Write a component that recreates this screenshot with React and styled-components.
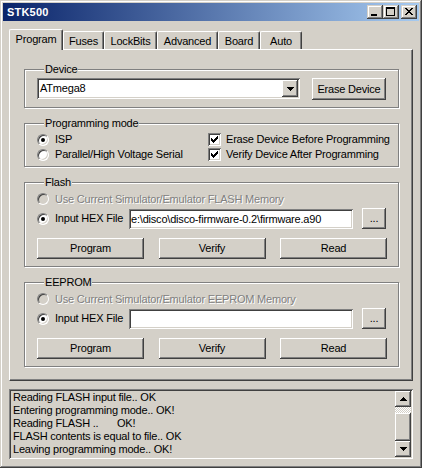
import React from 'react';
import styled, { createGlobalStyle } from 'styled-components';

const face = '#d4d0c8';
const font = '"Liberation Sans", Arial, sans-serif';

const Global = createGlobalStyle`
  html, body { margin: 0; padding: 0; background: ${face}; }
  body { font-family: ${font}; font-size: 11px; color: #000; letter-spacing: -0.2px; }
  * { box-sizing: border-box; }
`;

const raised = `box-shadow: inset -1px -1px #404040, inset 1px 1px #fff, inset -2px -2px #808080, inset 2px 2px ${face};`;
const sunken = `box-shadow: inset 1px 1px #808080, inset -1px -1px #fff, inset 2px 2px #404040, inset -2px -2px ${face};`;

const Window = styled.div`
  width: 422px;
  height: 468px;
  background: ${face};
  padding: 3px;
  box-shadow: inset -1px -1px #404040, inset 1px 1px ${face}, inset -2px -2px #808080, inset 2px 2px #fff;
  display: flex;
  flex-direction: column;
`;

const TitleBar = styled.div`
  flex: 0 0 18px;
  height: 18px;
  background: linear-gradient(to right, #0a246a, #a6caf0);
  display: flex;
  align-items: center;
  padding: 0 2px;
`;

const TitleText = styled.span`
  flex: 1;
  color: #fff;
  font-weight: bold;
  font-size: 11px;
  line-height: 13px;
  letter-spacing: 0.2px;
  padding-left: 2px;
`;

const CaptionButtons = styled.div`
  display: flex;
  align-items: center;
`;

const CaptionButton = styled.div`
  width: 16px;
  height: 14px;
  margin-left: ${p => p.$gap || 0}px;
  background: ${face};
  box-shadow: inset -1px -1px #404040, inset 1px 1px ${face}, inset -2px -2px #808080, inset 2px 2px #fff;
  display: flex;
`;

const Body = styled.div`
  flex: 1;
  display: flex;
  flex-direction: column;
  padding: 8px 6px 0 6px;
`;

const TabStrip = styled.div`
  height: 20px;
  display: flex;
  align-items: flex-end;
  position: relative;
  z-index: 1;
`;

const Tab = styled.div`
  width: ${p => p.$w}px;
  height: ${p => (p.$active ? 21 : 18)}px;
  margin-bottom: ${p => (p.$active ? -1 : 0)}px;
  background: ${face};
  border-top: 1px solid #fff;
  border-left: 1px solid #fff;
  border-right: 1px solid #404040;
  border-radius: 2px 2px 0 0;
  box-shadow: inset -1px 0 #808080;
  text-align: center;
  padding-top: 3px;
  line-height: 13px;
  font-size: 11px;
`;

const Panel = styled.div`
  height: 332px;
  border: 1px solid;
  border-color: #fff #404040 #404040 #fff;
  box-shadow: inset -1px -1px #808080;
  padding: 13px 13px 0 14px;
  display: flex;
  flex-direction: column;
  gap: 9px;
`;

const Group = styled.fieldset`
  margin: 0;
  min-width: 0;
  padding: ${p => p.$pt}px 12px ${p => p.$pb}px 12px;
  border: 1px solid #808080;
  box-shadow: inset 1px 1px #fff, 1px 1px #fff;
`;

const Legend = styled.legend`
  margin-left: 7px;
  padding: 0 1px;
  line-height: 13px;
  font-size: 11px;
  background: ${face};
`;

const DeviceRow = styled.div`
  display: flex;
  align-items: flex-start;
  gap: 12px;
`;

const Combo = styled.div`
  width: 263px;
  height: 21px;
  background: #fff;
  ${sunken}
  padding: 2px;
  display: flex;
  align-items: center;
`;

const ComboText = styled.span`
  flex: 1;
  padding-left: 1px;
  line-height: 17px;
`;

const SmallButton = styled.div`
  width: 16px;
  height: ${p => p.$h || 16}px;
  flex: 0 0 auto;
  background: ${face};
  ${raised}
  display: flex;
  align-items: center;
  justify-content: center;
`;

const Button = styled.div`
  width: ${p => p.$w}px;
  height: ${p => p.$h || 21}px;
  margin-left: ${p => p.$ml || 0}px;
  flex: 0 0 auto;
  background: ${face};
  ${raised}
  display: flex;
  align-items: center;
  justify-content: center;
  font-size: 11px;
  line-height: 13px;
`;

const ModeGrid = styled.div`
  display: grid;
  grid-template-columns: 171px auto;
  grid-auto-rows: 15px;
  align-items: center;
`;

const Option = styled.div`
  display: flex;
  align-items: center;
  gap: 6px;
  width: ${p => (p.$w ? `${p.$w}px` : 'auto')};
  flex: 0 0 auto;
  height: ${p => p.$h || 15}px;
  line-height: 13px;
`;

const OptionText = styled.span`
  color: ${p => (p.$disabled ? '#808080' : '#000')};
  text-shadow: ${p => (p.$disabled ? '1px 1px #fff' : 'none')};
  white-space: nowrap;
`;

const RadioCircle = styled.span`
  width: 12px;
  height: 12px;
  flex: 0 0 12px;
  border-radius: 50%;
  background: ${p => (p.$disabled ? face : '#fff')};
  border: 1px solid;
  border-color: #808080 #fff #fff #808080;
  box-shadow: inset 1px 1px #404040, inset -1px -1px ${face};
  display: flex;
  align-items: center;
  justify-content: center;
`;

const Dot = styled.span`
  width: 4px;
  height: 4px;
  border-radius: 50%;
  background: #000;
`;

const CheckRow = styled.div`
  display: flex;
  align-items: center;
  gap: 5px;
  line-height: 13px;
  white-space: nowrap;
`;

const CheckBox = styled.span`
  width: 13px;
  height: 13px;
  flex: 0 0 13px;
  background: #fff;
  ${sunken}
  display: flex;
`;

const Row = styled.div`
  display: flex;
  align-items: center;
  height: ${p => p.$h}px;
  margin-top: ${p => p.$mt || 0}px;
`;

const TextBox = styled.div`
  width: 224px;
  height: 20px;
  background: #fff;
  ${sunken}
  padding: 2px;
  line-height: 16px;
  white-space: nowrap;
  overflow: hidden;
`;

const ButtonRow = styled.div`
  width: 350px;
  display: flex;
  justify-content: space-between;
  margin-top: 9px;
`;

const Log = styled.div`
  height: 70px;
  margin-top: 8px;
  ${sunken}
  padding: 2px;
  display: flex;
`;

const LogText = styled.div`
  flex: 1;
  padding: 0 2px;
  line-height: 13px;
  white-space: pre;
  tab-size: 104px;
  overflow: hidden;
`;

const ScrollBar = styled.div`
  width: 16px;
  display: flex;
  flex-direction: column;
`;

const Track = styled.div`
  flex: 1;
  background-color: ${face};
  background-image: repeating-conic-gradient(#fff 0 25%, ${face} 0 50%);
  background-size: 2px 2px;
`;

const Thumb = styled.div`
  height: 28px;
  background: ${face};
  ${raised}
`;

const Glyph = ({ w, h, rects }) => (
  <svg width={w} height={h} viewBox={`0 0 ${w} ${h}`} shapeRendering="crispEdges" style={{ display: 'block' }}>
    {rects.map(([x, y, rw, rh], i) => (
      <rect key={i} x={x} y={y} width={rw} height={rh} fill="#000" />
    ))}
  </svg>
);

const arrowDown = [[0, 0, 7, 1], [1, 1, 5, 1], [2, 2, 3, 1], [3, 3, 1, 1]];
const arrowUp = [[3, 0, 1, 1], [2, 1, 3, 1], [1, 2, 5, 1], [0, 3, 7, 1]];
const minimizeG = [[4, 9, 6, 2]];
const maximizeG = [[3, 2, 9, 2], [3, 2, 1, 9], [11, 2, 1, 9], [3, 10, 9, 1]];
const closeG = Array.from({ length: 7 }).flatMap((_, i) => [
  [4 + i, 3 + i, 2, 1],
  [10 - i, 3 + i, 2, 1],
]);
const checkG = [0, 1, 2, 3, 4, 5, 6].map(c => [3 + c, 3 + [2, 3, 4, 3, 2, 1, 0][c], 1, 3]);

const Radio = ({ checked, disabled }) => (
  <RadioCircle $disabled={disabled}>{checked && <Dot />}</RadioCircle>
);

const Check = ({ label }) => (
  <CheckRow>
    <CheckBox>
      <Glyph w={13} h={13} rects={checkG} />
    </CheckBox>
    <span>{label}</span>
  </CheckRow>
);

const tabs = [
  ['Program', 54],
  ['Fuses', 41],
  ['LockBits', 53],
  ['Advanced', 61],
  ['Board', 42],
  ['Auto', 42],
];

const MemoryGroup = ({ title, kind, file }) => (
  <Group $pt={2} $pb={7}>
    <Legend>{title}</Legend>
    <Row $h={16}>
      <Option $h={16}>
        <Radio disabled />
        <OptionText $disabled>{`Use Current Simulator/Emulator ${kind} Memory`}</OptionText>
      </Option>
    </Row>
    <Row $h={21} $mt={1}>
      <Option $w={92}>
        <Radio checked />
        <OptionText>Input HEX File</OptionText>
      </Option>
      <TextBox>{file}</TextBox>
      <Button $w={24} $ml={9}>...</Button>
    </Row>
    <ButtonRow>
      <Button $w={107}>Program</Button>
      <Button $w={107}>Verify</Button>
      <Button $w={107}>Read</Button>
    </ButtonRow>
  </Group>
);

const logLines = [
  'Reading FLASH input file.. OK',
  'Entering programming mode.. OK!',
  'Reading FLASH ..\tOK!',
  'FLASH contents is equal to file.. OK',
  'Leaving programming mode.. OK!',
];

export default function App() {
  return (
    <>
      <Global />
      <Window>
        <TitleBar>
          <TitleText>STK500</TitleText>
          <CaptionButtons>
            <CaptionButton><Glyph w={16} h={14} rects={minimizeG} /></CaptionButton>
            <CaptionButton><Glyph w={16} h={14} rects={maximizeG} /></CaptionButton>
            <CaptionButton $gap={2}><Glyph w={16} h={14} rects={closeG} /></CaptionButton>
          </CaptionButtons>
        </TitleBar>
        <Body>
          <TabStrip>
            {tabs.map(([t, w], i) => (
              <Tab key={t} $w={w} $active={i === 0}>{t}</Tab>
            ))}
          </TabStrip>
          <Panel>
            <Group $pt={2} $pb={7}>
              <Legend>Device</Legend>
              <DeviceRow>
                <Combo>
                  <ComboText>ATmega8</ComboText>
                  <SmallButton $h={17}><Glyph w={7} h={4} rects={arrowDown} /></SmallButton>
                </Combo>
                <Button $w={74} $h={22}>Erase Device</Button>
              </DeviceRow>
            </Group>
            <Group $pt={2} $pb={4}>
              <Legend>Programming mode</Legend>
              <ModeGrid>
                <Option>
                  <Radio checked />
                  <OptionText>ISP</OptionText>
                </Option>
                <Check label="Erase Device Before Programming" />
                <Option>
                  <Radio />
                  <OptionText>Parallel/High Voltage Serial</OptionText>
                </Option>
                <Check label="Verify Device After Programming" />
              </ModeGrid>
            </Group>
            <MemoryGroup title="Flash" kind="FLASH" file="e:\disco\disco-firmware-0.2\firmware.a90" />
            <MemoryGroup title="EEPROM" kind="EEPROM" file="" />
          </Panel>
          <Log>
            <LogText>{logLines.join('\n')}</LogText>
            <ScrollBar>
              <SmallButton><Glyph w={7} h={4} rects={arrowUp} /></SmallButton>
              <Track />
              <Thumb />
              <SmallButton><Glyph w={7} h={4} rects={arrowDown} /></SmallButton>
            </ScrollBar>
          </Log>
        </Body>
      </Window>
    </>
  );
}
